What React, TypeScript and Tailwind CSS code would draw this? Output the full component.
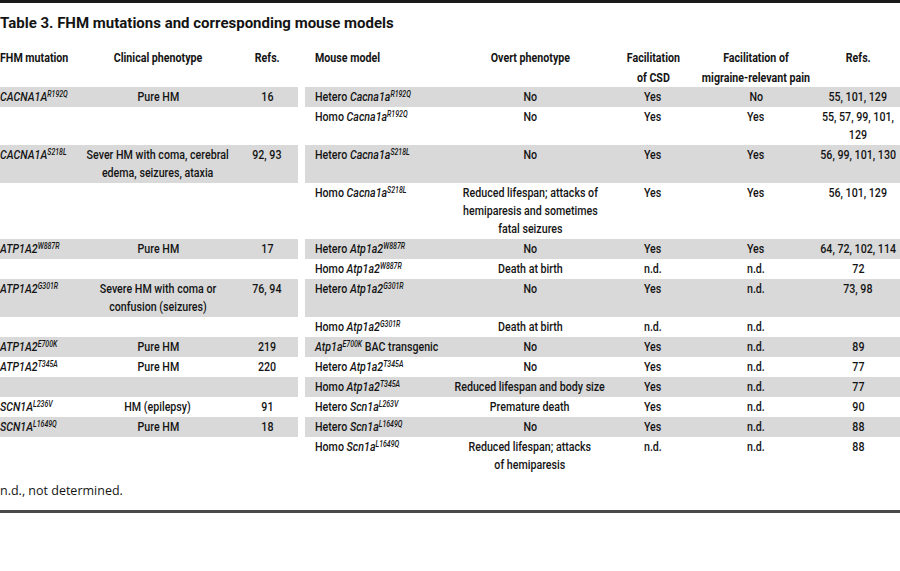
import type { ReactNode } from "react";

// no condensed face is installed, so Roboto is narrowed per cell
const body = "font-['Roboto',sans-serif]";

// gene / model name with italic superscript allele
function G({ name, sup }: { name: string; sup: string }) {
  return (
    <span className="italic">
      {name}
      <sup className="text-[8.5px] italic">{sup}</sup>
    </span>
  );
}

function Cell({ children, bg = "", left = false }: { children?: ReactNode; bg?: string; left?: boolean }) {
  return (
    <div className={`${bg} flex py-px ${left ? "justify-start" : "justify-center"}`}>
      <span className={`block whitespace-nowrap scale-x-[0.82] ${left ? "origin-left text-left" : "origin-center text-center"}`}>
        {children}
      </span>
    </div>
  );
}

type Row = {
  gene?: ReactNode;
  clin?: ReactNode;
  refsL?: string;
  model: ReactNode;
  overt: ReactNode;
  csd: string;
  pain: string;
  refsR?: ReactNode;
};

const rows: Row[] = [
  {
    gene: <G name="CACNA1A" sup="R192Q" />,
    clin: "Pure HM",
    refsL: "16",
    model: <>Hetero <G name="Cacna1a" sup="R192Q" /></>,
    overt: "No",
    csd: "Yes",
    pain: "No",
    refsR: "55, 101, 129",
  },
  {
    model: <>Homo <G name="Cacna1a" sup="R192Q" /></>,
    overt: "No",
    csd: "Yes",
    pain: "Yes",
    refsR: <>55, 57, 99, 101,<br />129</>,
  },
  {
    gene: <G name="CACNA1A" sup="S218L" />,
    clin: <>Sever HM with coma, cerebral<br />edema, seizures, ataxia</>,
    refsL: "92, 93",
    model: <>Hetero <G name="Cacna1a" sup="S218L" /></>,
    overt: "No",
    csd: "Yes",
    pain: "Yes",
    refsR: "56, 99, 101, 130",
  },
  {
    model: <>Homo <G name="Cacna1a" sup="S218L" /></>,
    overt: <>Reduced lifespan; attacks of<br />hemiparesis and sometimes<br />fatal seizures</>,
    csd: "Yes",
    pain: "Yes",
    refsR: "56, 101, 129",
  },
  {
    gene: <G name="ATP1A2" sup="W887R" />,
    clin: "Pure HM",
    refsL: "17",
    model: <>Hetero <G name="Atp1a2" sup="W887R" /></>,
    overt: "No",
    csd: "Yes",
    pain: "Yes",
    refsR: "64, 72, 102, 114",
  },
  {
    model: <>Homo <G name="Atp1a2" sup="W887R" /></>,
    overt: "Death at birth",
    csd: "n.d.",
    pain: "n.d.",
    refsR: "72",
  },
  {
    gene: <G name="ATP1A2" sup="G301R" />,
    clin: <>Severe HM with coma or<br />confusion (seizures)</>,
    refsL: "76, 94",
    model: <>Hetero <G name="Atp1a2" sup="G301R" /></>,
    overt: "No",
    csd: "Yes",
    pain: "n.d.",
    refsR: "73, 98",
  },
  {
    model: <>Homo <G name="Atp1a2" sup="G301R" /></>,
    overt: "Death at birth",
    csd: "n.d.",
    pain: "n.d.",
  },
  {
    gene: <G name="ATP1A2" sup="E700K" />,
    clin: "Pure HM",
    refsL: "219",
    model: <><G name="Atp1a" sup="E700K" /> BAC transgenic</>,
    overt: "No",
    csd: "Yes",
    pain: "n.d.",
    refsR: "89",
  },
  {
    gene: <G name="ATP1A2" sup="T345A" />,
    clin: "Pure HM",
    refsL: "220",
    model: <>Hetero <G name="Atp1a2" sup="T345A" /></>,
    overt: "No",
    csd: "Yes",
    pain: "n.d.",
    refsR: "77",
  },
  {
    model: <>Homo <G name="Atp1a2" sup="T345A" /></>,
    overt: "Reduced lifespan and body size",
    csd: "Yes",
    pain: "n.d.",
    refsR: "77",
  },
  {
    gene: <G name="SCN1A" sup="L236V" />,
    clin: "HM (epilepsy)",
    refsL: "91",
    model: <>Hetero <G name="Scn1a" sup="L263V" /></>,
    overt: "Premature death",
    csd: "Yes",
    pain: "n.d.",
    refsR: "90",
  },
  {
    gene: <G name="SCN1A" sup="L1649Q" />,
    clin: "Pure HM",
    refsL: "18",
    model: <>Hetero <G name="Scn1a" sup="L1649Q" /></>,
    overt: "No",
    csd: "Yes",
    pain: "n.d.",
    refsR: "88",
  },
  {
    model: <>Homo <G name="Scn1a" sup="L1649Q" /></>,
    overt: <>Reduced lifespan; attacks<br />of hemiparesis</>,
    csd: "n.d.",
    pain: "n.d.",
    refsR: "88",
  },
];

const grid = "grid grid-cols-[80px_156px_62px_7px_145px_160px_86px_120px_84px]";

export default function App() {
  return (
    <div className="w-[900px] h-[571px] bg-white text-[#141414] overflow-hidden">
      <div className="h-[3px] bg-[#1a1a1a]" />
      <h1 className="mt-[9px] h-[22px] leading-[22px] text-[15px] font-bold font-['Roboto',sans-serif] whitespace-nowrap">
        Table 3. FHM mutations and corresponding mouse models
      </h1>

      <div className={`${body} text-[13px] font-medium leading-[18px] mt-[13px]`}>
        {/* header */}
        <div className={`${grid} font-bold leading-[20px] h-[40px]`}>
          <Cell left>FHM mutation</Cell>
          <Cell>Clinical phenotype</Cell>
          <Cell>Refs.</Cell>
          <div />
          <div className="pl-[10px]">
            <Cell left>Mouse model</Cell>
          </div>
          <Cell>Overt phenotype</Cell>
          <Cell>Facilitation<br />of CSD</Cell>
          <Cell>Facilitation of<br />migraine-relevant pain</Cell>
          <Cell>Refs.</Cell>
        </div>

        {rows.map((r, i) => {
          const bg = i % 2 === 0 ? "bg-[#d9d9d9]" : "bg-white";
          return (
            <div key={i} className={grid}>
              <Cell bg={bg} left>{r.gene}</Cell>
              <Cell bg={bg}>{r.clin}</Cell>
              <Cell bg={bg}>{r.refsL}</Cell>
              <div />
              <div className={`${bg} pl-[10px]`}>
                <Cell left>{r.model}</Cell>
              </div>
              <Cell bg={bg}>{r.overt}</Cell>
              <Cell bg={bg}>{r.csd}</Cell>
              <Cell bg={bg}>{r.pain}</Cell>
              <Cell bg={bg}>{r.refsR}</Cell>
            </div>
          );
        })}
      </div>

      <p className="mt-[7px] text-[12.5px] leading-[18px] font-['Open_Sans',sans-serif]">
        n.d., not determined.
      </p>
      <div className="mt-[10px] h-[3px] bg-[#4a4a4a]" />
    </div>
  );
}
